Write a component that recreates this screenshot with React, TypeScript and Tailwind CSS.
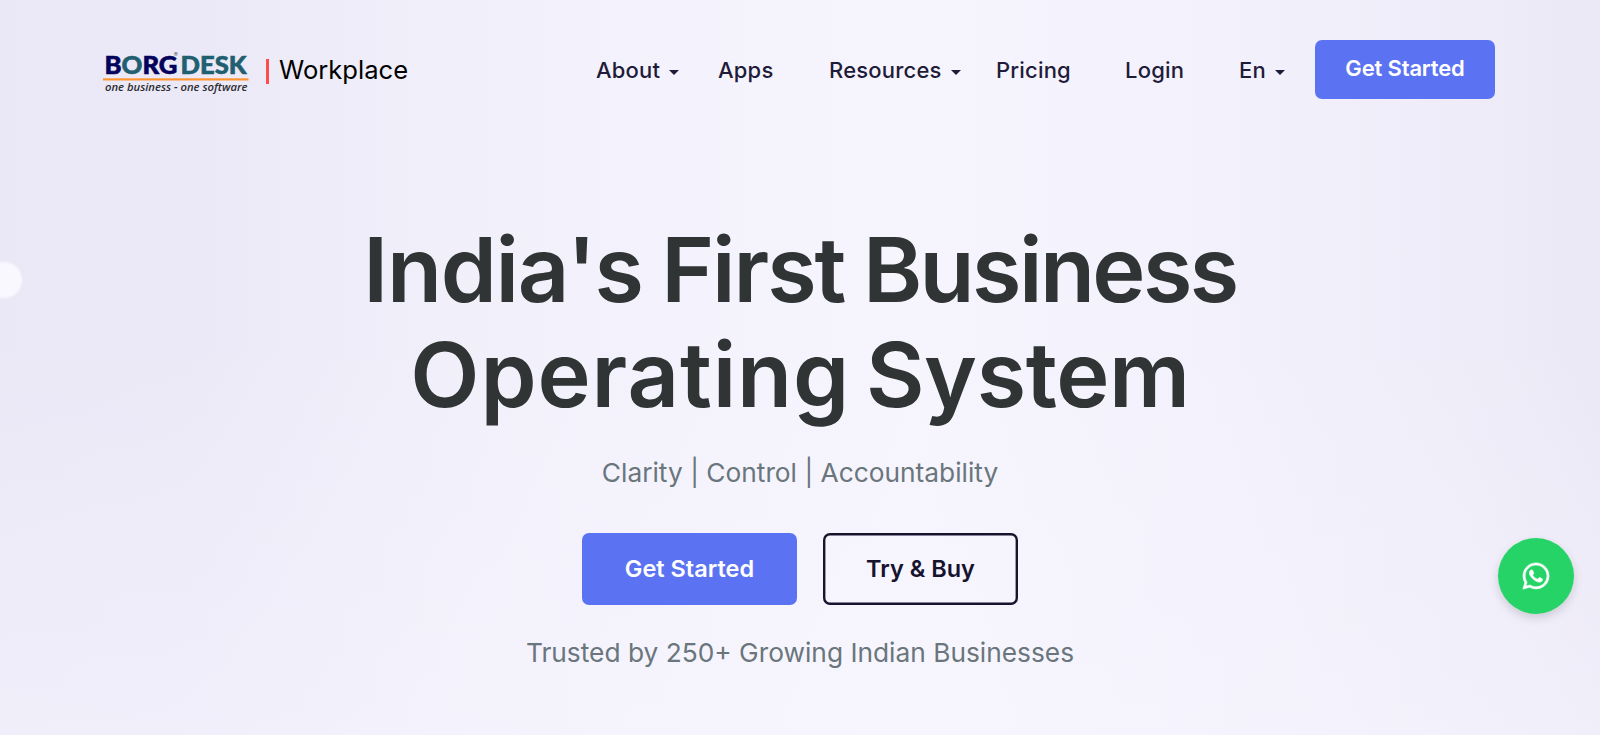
import React from 'react';
import { FaWhatsapp } from 'react-icons/fa';

const NAV_ITEMS = [
  { label: 'About', width: 'w-[122px]', caret: true },
  { label: 'Apps', width: 'w-[111px]', caret: false },
  { label: 'Resources', width: 'w-[167px]', caret: true },
  { label: 'Pricing', width: 'w-[129px]', caret: false },
  { label: 'Login', width: 'w-[114px]', caret: false },
  { label: 'En', width: 'w-[76px]', caret: true },
];

const Logo: React.FC = () => (
  <svg width="148" height="52" viewBox="0 0 148 52" className="shrink-0 overflow-visible">
    <g fontFamily="Lato, sans-serif" fontWeight="900" fontSize="25.5" strokeWidth="0.6">
      <text x="1.5" y="29.8" textLength="73" lengthAdjust="spacingAndGlyphs" fill="#02025c" stroke="#02025c">
        B<tspan fill="#1f5f70" stroke="#1f5f70">O</tspan>RG
      </text>
      <text x="77.5" y="29.8" textLength="66" lengthAdjust="spacingAndGlyphs" fill="#1f5f70" stroke="#1f5f70">
        DESK
      </text>
    </g>
    <text x="71" y="13" fontFamily="Inter, sans-serif" fontSize="5.5" fill="#555555">®</text>
    <rect x="0" y="34.3" width="145.5" height="2.2" fill="#ff9430" />
    <text
      x="2"
      y="47.4"
      textLength="142.5"
      lengthAdjust="spacingAndGlyphs"
      fontFamily="Open Sans, sans-serif"
      fontStyle="italic"
      fontWeight="600"
      fontSize="11.5"
      fill="#2b2b2f"
    >
      one business - one software
    </text>
  </svg>
);

const Header: React.FC = () => (
  <header className="flex items-center h-[59px] pl-[103px] pr-[104px]">
    <a className="flex items-center">
      <Logo />
      <span className="w-[3px] h-[25px] ml-[15px] mt-[3px] bg-[#ff4d4f]" />
      <span className="ml-2.5 text-[25.6px] leading-8 text-black">Workplace</span>
    </a>

    <nav className="flex items-center ml-auto mt-px text-[22px] leading-8 font-medium tracking-[0.2px] text-[#1f1c3a]">
      {NAV_ITEMS.map((item) => (
        <a key={item.label} className={`flex items-center gap-[9px] ${item.width}`}>
          {item.label}
          {item.caret && (
            <svg width="10" height="5" viewBox="0 0 10 5" className="mt-[5px]">
              <path d="M0 0h10L5 5z" fill="currentColor" />
            </svg>
          )}
        </a>
      ))}
    </nav>

    <button className="flex items-center justify-center w-[180px] h-[59px] pb-[2px] mr-px rounded-[7px] bg-[#5b73f3] text-white text-[22px] font-semibold tracking-[-0.15px]">
      Get Started
    </button>
  </header>
);

const Hero: React.FC = () => (
  <main className="flex flex-col items-center pt-[118px] text-center">
    <h1 className="text-[90px] leading-[105.4px] font-semibold text-[#303434]">
      <span className="block [word-spacing:-4px]">
        <span className="tracking-[-1.3px]">India's</span> <span className="tracking-[-2.1px]">First</span>{' '}
        <span className="tracking-[-2.6px]">Business</span>
      </span>
      <span className="block [word-spacing:-7px]">
        <span className="tracking-[0.9px]">Operating</span> <span className="tracking-[-0.4px]">System</span>
      </span>
    </h1>
    <p className="mt-[25px] text-[26.3px] leading-10 text-[#6a757c]">Clarity | Control | Accountability</p>

    <div className="flex gap-[26px] mt-10 text-[23.5px] font-semibold">
      <button className="w-[215px] h-[72px] rounded-[7px] bg-[#5b73f3] text-white">Get Started</button>
      <button className="w-[195px] h-[72px] rounded-[7px] shadow-[inset_0_0_0_2.4px_#17132f] text-[#17132f]">
        Try &amp; Buy
      </button>
    </div>

    <p className="mt-7 text-[26.3px] leading-10 text-[#6a757c]">Trusted by 250+ Growing Indian Businesses</p>
  </main>
);

export default function App() {
  return (
    <div className="relative h-[735px] overflow-hidden pt-10 font-['Inter',sans-serif] bg-[linear-gradient(90deg,#eae8f6_0%,#ebe9f7_12%,#f1effa_28%,#f4f3fd_42%,#f6f5fe_57%,#f3f1fc_75%,#eeecf8_92%,#ebe8f6_100%)]">
      <div className="absolute inset-0 bg-[linear-gradient(180deg,transparent_45%,rgba(248,247,255,0.4)_100%)]" />
      <span className="absolute -left-3.5 top-[262px] size-9 rounded-full bg-[#f9f8fe] blur-[1px]" />

      <div className="relative">
        <Header />
        <Hero />
      </div>

      <a className="absolute left-[1498px] top-[538px] flex items-center justify-center size-[76px] pb-px rounded-full bg-[#25d366] text-white shadow-[0_4px_10px_rgba(0,0,0,0.15)]">
        <FaWhatsapp size={30} stroke="currentColor" strokeWidth={10} />
      </a>
    </div>
  );
}
